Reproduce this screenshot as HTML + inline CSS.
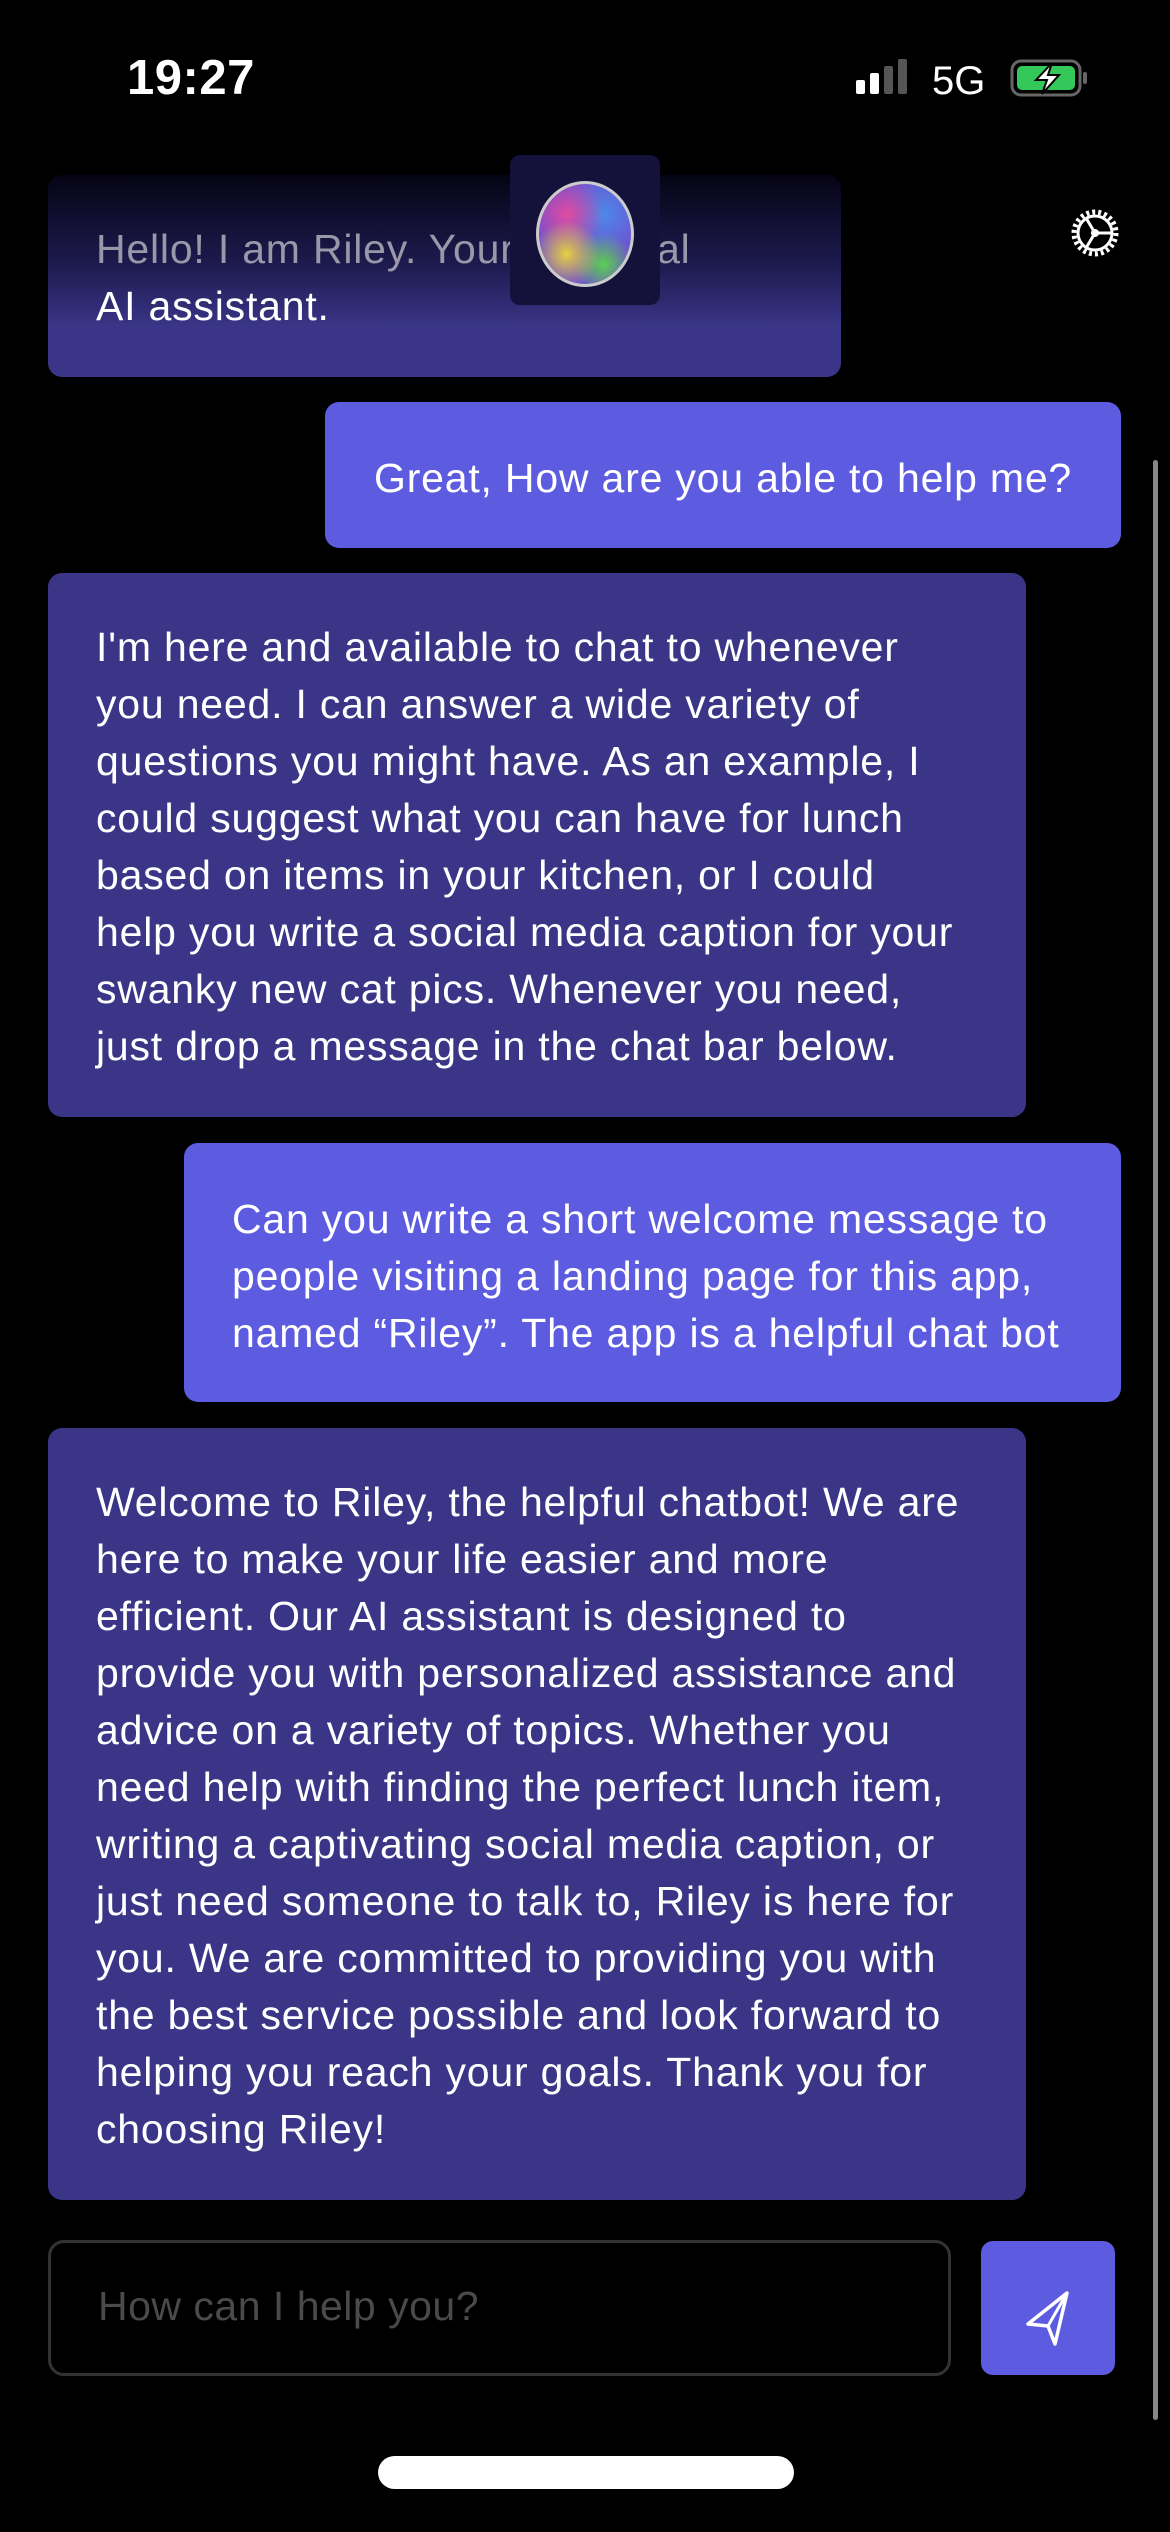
<!DOCTYPE html>
<html><head><meta charset="utf-8">
<style>
html,body{margin:0;padding:0;background:#000;}
body{width:1170px;height:2532px;position:relative;overflow:hidden;font-family:"Liberation Sans",sans-serif;color:#fff;}
.b{position:absolute;border-radius:14px;box-sizing:border-box;padding:46px 0 0 48px;font-size:41px;line-height:57px;letter-spacing:0.8px;white-space:nowrap;}
.ai{background:#3a3587;}
.me{background:#5d5ce0;}
</style></head><body>
<div style="position:absolute;left:127px;top:50px;font-size:49px;font-weight:bold;letter-spacing:0.5px">19:27</div>
<svg style="position:absolute;left:850px;top:58px" width="250" height="42" viewBox="0 0 250 42">
<rect x="6" y="22" width="9" height="14" rx="2" fill="#fff"/>
<rect x="20" y="15" width="9" height="21" rx="2" fill="#fff"/>
<rect x="34" y="8" width="9" height="28" rx="2" fill="#555"/>
<rect x="48" y="1" width="9" height="35" rx="2" fill="#555"/>
<text x="82" y="36" font-family="Liberation Sans" font-size="40" fill="#fff">5G</text>
<rect x="162" y="3" width="68" height="34" rx="9" fill="none" stroke="#666" stroke-width="3"/>
<rect x="167" y="8" width="58" height="24" rx="5" fill="#34c759"/>
<rect x="233" y="14" width="4" height="12" rx="2" fill="#666"/>
<path d="M202 5 L186 22 L197 22 L192 36 L209 17 L198 17 Z" fill="#fff" stroke="#000" stroke-width="2"/>
</svg>
<div class="b" style="left:48px;top:175px;width:793px;height:202px;background:linear-gradient(#050414,#1e1b50 45%,#3a3587 75%,#3a3587)">
<span style="color:#9a98a8">Hello! I am Riley. Your personal</span><br>AI assistant.</div>
<div style="position:absolute;left:510px;top:155px;width:150px;height:150px;border-radius:10px;background:#14123a;overflow:hidden">
<div style="position:absolute;left:26px;top:26px;width:98px;height:106px;border-radius:50%;border:3px solid #ccc;box-sizing:border-box;background:radial-gradient(circle at 30% 70%,#e8d040 0,transparent 35%),radial-gradient(circle at 70% 80%,#5ad050 0,transparent 30%),radial-gradient(circle at 30% 30%,#e04aa0 0,transparent 40%),radial-gradient(circle at 70% 30%,#4a8ae8 0,transparent 45%),#7050d0"></div>
</div>
<svg style="position:absolute;left:1066px;top:204px" width="58" height="58" viewBox="0 0 58 58">
<circle cx="29" cy="29" r="21" fill="none" stroke="#fff" stroke-width="5" stroke-dasharray="3 3"/>
<circle cx="29" cy="29" r="17" fill="none" stroke="#fff" stroke-width="3"/>
<path d="M29 29 L20 14 M29 29 L20 44 M29 29 L47 29" stroke="#fff" stroke-width="3"/>
<circle cx="29" cy="29" r="4" fill="#fff"/>
</svg>
<div class="b me" style="left:325px;top:402px;width:796px;height:146px;padding:48px 0 0 49px">Great, How are you able to help me?</div>
<div class="b ai" style="left:48px;top:573px;width:978px;height:544px">I'm here and available to chat to whenever<br>you need. I can answer a wide variety of<br>questions you might have. As an example, I<br>could suggest what you can have for lunch<br>based on items in your kitchen, or I could<br>help you write a social media caption for your<br>swanky new cat pics. Whenever you need,<br>just drop a message in the chat bar below.</div>
<div class="b me" style="left:184px;top:1143px;width:937px;height:259px;padding-top:48px">Can you write a short welcome message to<br>people visiting a landing page for this app,<br>named “Riley”. The app is a helpful chat bot</div>
<div class="b ai" style="left:48px;top:1428px;width:978px;height:772px">Welcome to Riley, the helpful chatbot! We are<br>here to make your life easier and more<br>efficient. Our AI assistant is designed to<br>provide you with personalized assistance and<br>advice on a variety of topics. Whether you<br>need help with finding the perfect lunch item,<br>writing a captivating social media caption, or<br>just need someone to talk to, Riley is here for<br>you. We are committed to providing you with<br>the best service possible and look forward to<br>helping you reach your goals. Thank you for<br>choosing Riley!</div>
<div style="position:absolute;left:48px;top:2240px;width:903px;height:136px;box-sizing:border-box;border:3px solid #333;border-radius:16px;padding:40px 0 0 47px;font-size:41px;letter-spacing:0.5px;color:#4a4a4a">How can I help you?</div>
<div style="position:absolute;left:981px;top:2241px;width:134px;height:134px;border-radius:12px;background:#5d5ce0"></div>
<svg style="position:absolute;left:1020px;top:2290px" width="56" height="56" viewBox="0 0 56 56">
<path d="M47 3 L8 34 L28 36 L35 54 Z" fill="none" stroke="#fff" stroke-width="3.5" stroke-linejoin="round"/>
<path d="M28 36 L47 3" stroke="#fff" stroke-width="3"/>
</svg>
<div style="position:absolute;left:1153px;top:460px;width:5px;height:1960px;border-radius:3px;background:#888"></div>
<div style="position:absolute;left:378px;top:2456px;width:416px;height:33px;border-radius:17px;background:#fff"></div>
</body></html>
